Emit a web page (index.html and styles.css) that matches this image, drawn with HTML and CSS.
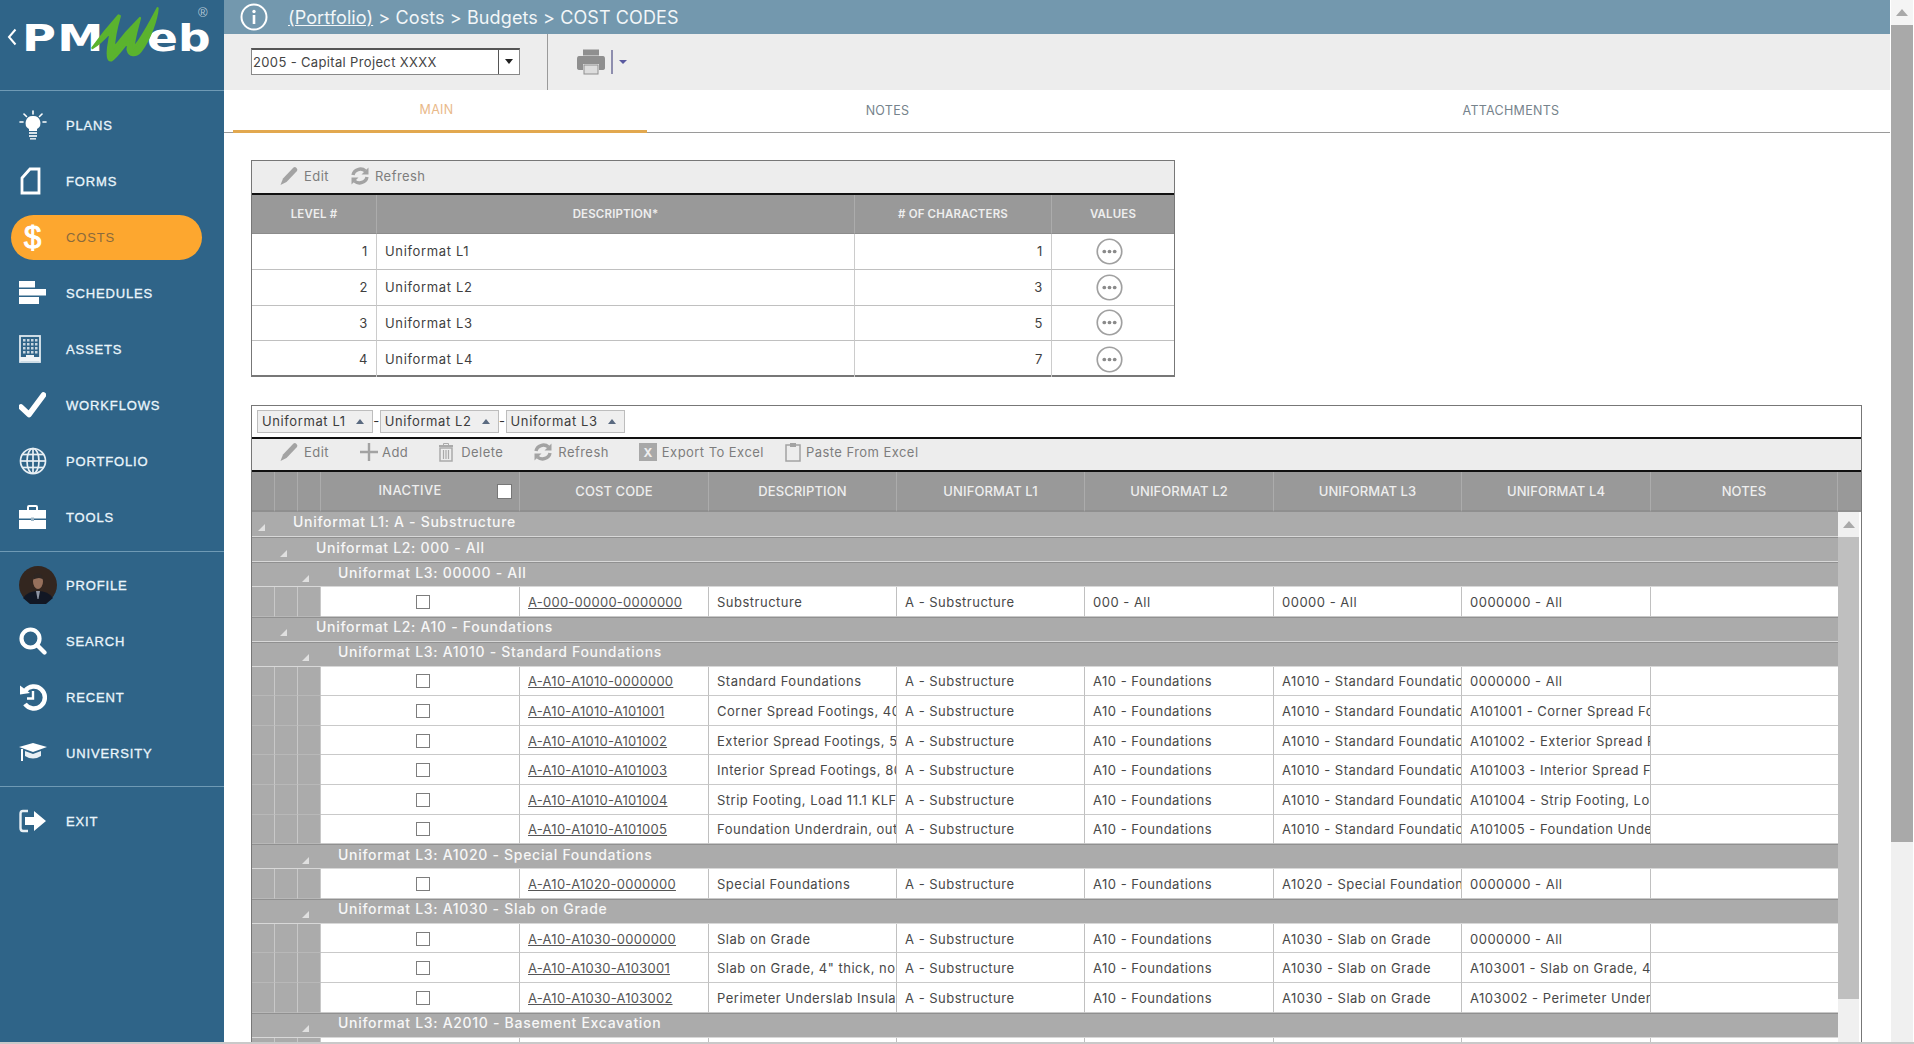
FILE: index.html
```html
<!DOCTYPE html>
<html lang="en">
<head>
<meta charset="utf-8">
<title>Cost Codes</title>
<link rel="stylesheet" href="styles.css">
</head>
<body>
<svg class="sprite" aria-hidden="true">
  <symbol id="i-pencil" viewBox="0 0 20 20"><path d="M1.5 19 L4 12.5 L14.5 1.5 Q16 0.5 17.5 2 Q19 3.5 18 5 L7.5 16 Z" fill="#a3a3a3"/></symbol>
  <symbol id="i-refresh" viewBox="0 0 20 20"><path d="M3 9 A7.5 7 0 0 1 15.5 5" fill="none" stroke="#a3a3a3" stroke-width="3.4"/><path d="M18.5 1.5 V8.5 H11.5 Z" fill="#a3a3a3"/><path d="M17 11 A7.5 7 0 0 1 4.5 15" fill="none" stroke="#a3a3a3" stroke-width="3.4"/><path d="M1.5 18.5 V11.5 H8.5 Z" fill="#a3a3a3"/></symbol>
  <symbol id="i-more" viewBox="0 0 26 26"><circle cx="13" cy="13" r="11.8" fill="#fff" stroke="#a0a0a0" stroke-width="1.6"/><circle cx="8" cy="13" r="1.8" fill="#8a8a8a"/><circle cx="13" cy="13" r="1.8" fill="#8a8a8a"/><circle cx="18" cy="13" r="1.8" fill="#8a8a8a"/></symbol>
</svg>
<div class="app">
  <aside class="sidebar">
    <div class="logo">
      <svg class="logo-chev" viewBox="0 0 10 18"><path d="M8.5 1.5 L2 9 L8.5 16.5" fill="none" stroke="#fff" stroke-width="2"/></svg>
      <span class="logo-pm">PM</span><span class="logo-eb">eb</span>
      <span class="logo-reg">®</span>
      <svg class="logo-w" viewBox="262 18 220 178"><path d="M272 150 C300 110 325 80 352 50 L356 52 C345 90 338 120 338 150 C360 120 385 90 418 58 C410 90 400 120 398 150 C420 125 445 80 472 28 C470 60 450 120 420 160 C405 178 385 175 380 155 L382 130 C365 150 345 180 330 188 C318 190 318 170 320 150 L328 100 C310 120 290 140 272 150 Z" fill="#5bb32e" stroke="#5bb32e" stroke-width="7" stroke-linejoin="round"/></svg>
    </div>
    <nav class="nav-group">
      <a class="nav-item"><span class="nav-icon"><svg viewBox="0 0 28 30" width="28" height="30"><g stroke="#fff" stroke-width="1.6" stroke-linecap="round"><path d="M14 1 V4"/><path d="M5 4 L7.5 6.5"/><path d="M23 4 L20.5 6.5"/><path d="M1 12 H4"/><path d="M24 12 H27"/></g><path d="M14 6 A7 7 0 0 1 18 19 L18 21 H10 L10 19 A7 7 0 0 1 14 6 Z" fill="#fff"/><rect x="10" y="22" width="8" height="2" fill="#d8e2ea"/><rect x="10" y="25" width="8" height="2" fill="#d8e2ea"/><rect x="11" y="28" width="6" height="1.6" fill="#d8e2ea"/></svg></span>PLANS</a>
      <a class="nav-item"><span class="nav-icon"><svg viewBox="0 0 22 28" width="22" height="28"><path d="M3 11 L11 2 H20 V26 H3 Z" fill="none" stroke="#fff" stroke-width="2.8"/></svg></span>FORMS</a>
      <a class="nav-item active"><span class="nav-icon dollar">$</span>COSTS</a>
      <a class="nav-item"><span class="nav-icon"><svg viewBox="0 0 27 24" width="27" height="24"><rect x="0" y="0" width="16" height="6.5" fill="#fff"/><rect x="0" y="8" width="27" height="6.5" fill="#fff"/><rect x="0" y="16" width="20" height="7" fill="#fff"/></svg></span>SCHEDULES</a>
      <a class="nav-item"><span class="nav-icon"><svg viewBox="0 0 22 28" width="22" height="28"><rect x="1" y="1" width="20" height="26" fill="none" stroke="#dfe9f0" stroke-width="1.8"/><g fill="#c7d6e0"><rect x="4" y="4" width="2.5" height="2.5"/><rect x="8" y="4" width="2.5" height="2.5"/><rect x="12" y="4" width="2.5" height="2.5"/><rect x="16" y="4" width="2.5" height="2.5"/><rect x="4" y="8" width="2.5" height="2.5"/><rect x="8" y="8" width="2.5" height="2.5"/><rect x="12" y="8" width="2.5" height="2.5"/><rect x="16" y="8" width="2.5" height="2.5"/><rect x="4" y="12" width="2.5" height="2.5"/><rect x="8" y="12" width="2.5" height="2.5"/><rect x="12" y="12" width="2.5" height="2.5"/><rect x="16" y="12" width="2.5" height="2.5"/><rect x="4" y="16" width="2.5" height="2.5"/><rect x="8" y="16" width="2.5" height="2.5"/><rect x="12" y="16" width="2.5" height="2.5"/><rect x="16" y="16" width="2.5" height="2.5"/></g><path d="M1 26 V22 H7 V20 H15 V22 H21 V26 Z" fill="#eef3f6"/></svg></span>ASSETS</a>
      <a class="nav-item"><span class="nav-icon"><svg viewBox="0 0 27 26" width="27" height="26"><path d="M2 15 L10 22.5 L24.5 3" fill="none" stroke="#fff" stroke-width="5.5" stroke-linejoin="round" stroke-linecap="round"/></svg></span>WORKFLOWS</a>
      <a class="nav-item"><span class="nav-icon"><svg viewBox="0 0 28 28" width="28" height="28"><g fill="none" stroke="#e8eff4" stroke-width="1.7"><circle cx="14" cy="14" r="12.5"/><ellipse cx="14" cy="14" rx="6" ry="12.5"/><path d="M14 1.5 V26.5"/><path d="M1.5 14 H26.5"/><path d="M3.5 7.5 H24.5"/><path d="M3.5 20.5 H24.5"/></g></svg></span>PORTFOLIO</a>
      <a class="nav-item"><span class="nav-icon"><svg viewBox="0 0 27 24" width="27" height="24"><path d="M9 5 V2 Q9 1 10 1 H17 Q18 1 18 2 V5" fill="none" stroke="#fff" stroke-width="2"/><rect x="0" y="5" width="27" height="8.5" fill="#fff"/><rect x="0" y="15" width="27" height="9" fill="#fff"/><rect x="12" y="12.5" width="3" height="3.5" fill="#9db6c6"/></svg></span>TOOLS</a>
    </nav>
    <nav class="nav-group nav-mid">
      <a class="nav-item"><span class="nav-icon"><svg class="avatar" viewBox="0 0 38 38" width="38" height="38"><circle cx="19" cy="19" r="19" fill="#33261f"/><path d="M4 32 Q9 25 19 25 Q29 25 34 32 L27 38 H11 Z" fill="#121724"/><path d="M17 25 H21 L19.5 33 H18.5 Z" fill="#8f95a3"/><ellipse cx="19" cy="15.5" rx="5" ry="7.5" fill="#96705c"/><path d="M14 13.5 Q14 7.5 19 7.5 Q24 7.5 24 13.5 Q21 10.5 14 13.5 Z" fill="#2f2622"/></svg></span>PROFILE</a>
      <a class="nav-item"><span class="nav-icon"><svg viewBox="0 0 28 28" width="28" height="28"><circle cx="11.5" cy="11.5" r="9" fill="none" stroke="#fff" stroke-width="4.2"/><path d="M18 18 L25.5 25.5" stroke="#fff" stroke-width="4.2" stroke-linecap="round"/></svg></span>SEARCH</a>
      <a class="nav-item"><span class="nav-icon"><svg viewBox="0 0 28 28" width="28" height="28"><path d="M6 8 A11 11 0 1 1 6 21" fill="none" stroke="#fff" stroke-width="4.4"/><path d="M1 2.5 L11 10 L1 11.5 Z" fill="#fff"/><path d="M14 8 V15.5 H8" fill="none" stroke="#fff" stroke-width="2.4"/></svg></span>RECENT</a>
      <a class="nav-item"><span class="nav-icon"><svg viewBox="0 0 28 22" width="28" height="22"><path d="M0 5 L14 1 L28 5 L14 10 Z" fill="#fff"/><path d="M6 9 L14 12 L22 9 V14 Q14 19 6 14 Z" fill="#e8eff4"/><path d="M3 7 V19" stroke="#fff" stroke-width="2"/></svg></span>UNIVERSITY</a>
    </nav>
    <nav class="nav-group last">
      <a class="nav-item"><span class="nav-icon"><svg viewBox="0 0 28 24" width="28" height="24"><path d="M9 2 H4 Q1.5 2 1.5 5 V19 Q1.5 22 4 22 H9" fill="none" stroke="#e8eff4" stroke-width="2.4"/><path d="M6 8 H15 V2 L27 12 L15 22 V16 H6 Z" fill="#fff"/></svg></span>EXIT</a>
    </nav>
  </aside>

  <div class="main">
    <header class="crumbs">
      <svg class="info" viewBox="0 0 28 28" width="28" height="28"><circle cx="14" cy="14" r="12.5" fill="none" stroke="#fff" stroke-width="2"/><circle cx="14" cy="8.5" r="1.7" fill="#fff"/><rect x="12.7" y="12" width="2.6" height="9" fill="#fff"/></svg>
      <span class="trail"><a class="trail-link">(Portfolio)</a> &gt; Costs &gt; Budgets &gt; COST CODES</span>
    </header>
    <div class="toolbar">
      <div class="select"><span class="select-text">2005 - Capital Project XXXX</span><span class="select-btn"><i class="caret-down"></i></span></div>
      <div class="print">
        <svg viewBox="0 0 28 26" width="28" height="26"><rect x="6" y="0.5" width="16" height="6" fill="#8f8f8f"/><path d="M2 7 H26 Q28 7 28 10 V19 Q28 21 25 21 H22 V15 H6 V21 H3 Q0 21 0 19 V10 Q0 7 2 7 Z" fill="#8f8f8f"/><rect x="7" y="16" width="14" height="9" fill="#ddd" stroke="#8f8f8f"/></svg>
        <span class="print-sep"></span><i class="caret-print"></i>
      </div>
    </div>
    <div class="tabs">
      <a class="tab tab-main active">MAIN</a>
      <a class="tab tab-notes">NOTES</a>
      <a class="tab tab-att">ATTACHMENTS</a>
    </div>
    <div class="content">
      <section class="panel levels">
        <div class="actions actions-tight">
          <span class="action"><svg width="20" height="20"><use href="#i-pencil"/></svg>Edit</span>
          <span class="action"><svg width="20" height="20"><use href="#i-refresh"/></svg>Refresh</span>
        </div>
        <table class="lv">
          <colgroup><col class="lv-a"><col class="lv-b"><col class="lv-c"><col class="lv-d"></colgroup>
          <thead><tr><th>LEVEL #</th><th>DESCRIPTION*</th><th># OF CHARACTERS</th><th>VALUES</th></tr></thead>
          <tbody>
            <tr><td class="num">1</td><td>Uniformat L1</td><td class="num">1</td><td class="more"><svg width="27" height="27"><use href="#i-more"/></svg></td></tr>
            <tr><td class="num">2</td><td>Uniformat L2</td><td class="num">3</td><td class="more"><svg width="27" height="27"><use href="#i-more"/></svg></td></tr>
            <tr><td class="num">3</td><td>Uniformat L3</td><td class="num">5</td><td class="more"><svg width="27" height="27"><use href="#i-more"/></svg></td></tr>
            <tr><td class="num">4</td><td>Uniformat L4</td><td class="num">7</td><td class="more"><svg width="27" height="27"><use href="#i-more"/></svg></td></tr>
          </tbody>
        </table>
      </section>

      <section class="panel codes">
        <div class="chips">
          <span class="chip">Uniformat L1<i class="caret-up"></i></span><span class="dash">-</span><span class="chip">Uniformat L2<i class="caret-up"></i></span><span class="dash">-</span><span class="chip">Uniformat L3<i class="caret-up"></i></span>
        </div>
        <div class="actions">
          <span class="action"><svg width="20" height="20"><use href="#i-pencil"/></svg>Edit</span>
          <span class="action action-add"><svg width="20" height="20" viewBox="0 0 20 20"><path d="M10 1 V19 M1 10 H19" stroke="#a3a3a3" stroke-width="2.4"/></svg>Add</span>
          <span class="action action-wide"><svg width="16" height="20" viewBox="0 0 16 20"><path d="M5.5 3 V1.5 H10.5 V3" fill="none" stroke="#aaa"/><rect x="1" y="3" width="14" height="2" fill="#aaa"/><rect x="2" y="6" width="12" height="13" fill="none" stroke="#aaa" stroke-width="1.5"/><path d="M5.5 8 V17 M8 8 V17 M10.5 8 V17" stroke="#aaa" stroke-width="1.2"/></svg>Delete</span>
          <span class="action"><svg width="20" height="20"><use href="#i-refresh"/></svg>Refresh</span>
          <span class="action"><span class="xl">X</span>Export To Excel</span>
          <span class="action action-near"><svg width="16" height="20" viewBox="0 0 16 20"><rect x="1" y="3" width="14" height="16" fill="none" stroke="#a3a3a3" stroke-width="1.5"/><rect x="5" y="1" width="6" height="4" fill="#a3a3a3"/></svg>Paste From Excel</span>
        </div>
        <table class="gh">
          <colgroup><col class="c-g1"><col class="c-g2"><col class="c-g3"><col class="c-in"><col class="c-cc"><col class="c-de"><col class="c-l1"><col class="c-l2"><col class="c-l3"><col class="c-l4"><col class="c-no"><col class="c-sb"></colgroup>
          <thead><tr><th></th><th></th><th></th><th class="inactive-h"><span class="inactive-wrap"><span class="inactive-label">INACTIVE</span><i class="cb-white"></i></span></th><th>COST CODE</th><th>DESCRIPTION</th><th>UNIFORMAT L1</th><th>UNIFORMAT L2</th><th>UNIFORMAT L3</th><th>UNIFORMAT L4</th><th>NOTES</th><th></th></tr></thead>
        </table>
        <div class="gbody">
          <div class="gscroll">
            <table class="gt">
              <colgroup><col class="c-g1"><col class="c-g2"><col class="c-g3"><col class="c-in"><col class="c-cc"><col class="c-de"><col class="c-l1"><col class="c-l2"><col class="c-l3"><col class="c-l4"><col class="c-no"></colgroup>
              <tbody>
                <tr class="grp l1"><td colspan="11"><i class="tri"></i>Uniformat L1: A - Substructure</td></tr>
                <tr class="grp l2"><td colspan="11"><i class="tri"></i>Uniformat L2: 000 - All</td></tr>
                <tr class="grp l3"><td colspan="11"><i class="tri"></i>Uniformat L3: 00000 - All</td></tr>
                <tr class="row"><td class="g"></td><td class="g"></td><td class="g"></td><td class="ck"><i class="cb"></i></td><td><a>A-000-00000-0000000</a></td><td>Substructure</td><td>A - Substructure</td><td>000 - All</td><td>00000 - All</td><td>0000000 - All</td><td></td></tr>
                <tr class="grp l2"><td colspan="11"><i class="tri"></i>Uniformat L2: A10 - Foundations</td></tr>
                <tr class="grp l3"><td colspan="11"><i class="tri"></i>Uniformat L3: A1010 - Standard Foundations</td></tr>
                <tr class="row"><td class="g"></td><td class="g"></td><td class="g"></td><td class="ck"><i class="cb"></i></td><td><a>A-A10-A1010-0000000</a></td><td>Standard Foundations</td><td>A - Substructure</td><td>A10 - Foundations</td><td>A1010 - Standard Foundations</td><td>0000000 - All</td><td></td></tr>
                <tr class="row"><td class="g"></td><td class="g"></td><td class="g"></td><td class="ck"><i class="cb"></i></td><td><a>A-A10-A1010-A101001</a></td><td>Corner Spread Footings, 40 SF</td><td>A - Substructure</td><td>A10 - Foundations</td><td>A1010 - Standard Foundations</td><td>A101001 - Corner Spread Footings</td><td></td></tr>
                <tr class="row"><td class="g"></td><td class="g"></td><td class="g"></td><td class="ck"><i class="cb"></i></td><td><a>A-A10-A1010-A101002</a></td><td>Exterior Spread Footings, 5 SF</td><td>A - Substructure</td><td>A10 - Foundations</td><td>A1010 - Standard Foundations</td><td>A101002 - Exterior Spread Footings</td><td></td></tr>
                <tr class="row"><td class="g"></td><td class="g"></td><td class="g"></td><td class="ck"><i class="cb"></i></td><td><a>A-A10-A1010-A101003</a></td><td>Interior Spread Footings, 80 SF</td><td>A - Substructure</td><td>A10 - Foundations</td><td>A1010 - Standard Foundations</td><td>A101003 - Interior Spread Footings</td><td></td></tr>
                <tr class="row"><td class="g"></td><td class="g"></td><td class="g"></td><td class="ck"><i class="cb"></i></td><td><a>A-A10-A1010-A101004</a></td><td>Strip Footing, Load 11.1 KLF, Soil</td><td>A - Substructure</td><td>A10 - Foundations</td><td>A1010 - Standard Foundations</td><td>A101004 - Strip Footing, Load</td><td></td></tr>
                <tr class="row"><td class="g"></td><td class="g"></td><td class="g"></td><td class="ck"><i class="cb"></i></td><td><a>A-A10-A1010-A101005</a></td><td>Foundation Underdrain, outside</td><td>A - Substructure</td><td>A10 - Foundations</td><td>A1010 - Standard Foundations</td><td>A101005 - Foundation Underdrain</td><td></td></tr>
                <tr class="grp l3"><td colspan="11"><i class="tri"></i>Uniformat L3: A1020 - Special Foundations</td></tr>
                <tr class="row"><td class="g"></td><td class="g"></td><td class="g"></td><td class="ck"><i class="cb"></i></td><td><a>A-A10-A1020-0000000</a></td><td>Special Foundations</td><td>A - Substructure</td><td>A10 - Foundations</td><td>A1020 - Special Foundations</td><td>0000000 - All</td><td></td></tr>
                <tr class="grp l3"><td colspan="11"><i class="tri"></i>Uniformat L3: A1030 - Slab on Grade</td></tr>
                <tr class="row"><td class="g"></td><td class="g"></td><td class="g"></td><td class="ck"><i class="cb"></i></td><td><a>A-A10-A1030-0000000</a></td><td>Slab on Grade</td><td>A - Substructure</td><td>A10 - Foundations</td><td>A1030 - Slab on Grade</td><td>0000000 - All</td><td></td></tr>
                <tr class="row"><td class="g"></td><td class="g"></td><td class="g"></td><td class="ck"><i class="cb"></i></td><td><a>A-A10-A1030-A103001</a></td><td>Slab on Grade, 4" thick, non</td><td>A - Substructure</td><td>A10 - Foundations</td><td>A1030 - Slab on Grade</td><td>A103001 - Slab on Grade, 4" thick</td><td></td></tr>
                <tr class="row"><td class="g"></td><td class="g"></td><td class="g"></td><td class="ck"><i class="cb"></i></td><td><a>A-A10-A1030-A103002</a></td><td>Perimeter Underslab Insulation</td><td>A - Substructure</td><td>A10 - Foundations</td><td>A1030 - Slab on Grade</td><td>A103002 - Perimeter Underslab</td><td></td></tr>
                <tr class="grp l3"><td colspan="11"><i class="tri"></i>Uniformat L3: A2010 - Basement Excavation</td></tr>
                <tr class="row"><td class="g"></td><td class="g"></td><td class="g"></td><td class="ck"></td><td></td><td></td><td></td><td></td><td></td><td></td><td></td></tr>
              </tbody>
            </table>
          </div>
          <div class="vscroll"><span class="vs-up"><i class="caret-scroll"></i></span><span class="vs-thumb"></span><span class="vs-track"></span></div>
        </div>
      </section>
    </div>
  </div>

  <div class="pagebar"><span class="pb-up"><i class="caret-scroll"></i></span><span class="pb-thumb"></span><span class="pb-track"></span></div>
</div>
</body>
</html>
```

FILE: styles.css
```css
* { box-sizing: border-box; }
html, body { margin: 0; padding: 0; height: 100%; overflow: hidden; background: #fff; }
body { font-family: Inter, "Liberation Sans", sans-serif; font-size: 13px; color: #444; }
a { color: inherit; text-decoration: none; }
i { font-style: normal; }
.sprite { position: absolute; width: 0; height: 0; overflow: hidden; }

.app { display: flex; width: 1914px; height: 1044px; border-bottom: 2px solid #c9c9c9; overflow: hidden; }

/* sidebar */
.sidebar { width: 224px; flex: none; background: #2f6488; color: #fff; font-family: "Liberation Sans", Arial, sans-serif; }
.logo { position: relative; height: 91px; border-bottom: 1px solid #6f9ab5; padding: 16px 0 0 22px; display: flex; align-items: flex-start; color: #fff; font-family: "DejaVu Sans", sans-serif; font-weight: 700; font-size: 38px; line-height: 44px; }
.logo-chev { position: absolute; left: 7px; top: 28px; width: 10px; height: 18px; }
.logo-pm { letter-spacing: 1px; width: 125px; transform: scaleX(1.22); transform-origin: left; }
.logo-eb { letter-spacing: 0; transform: scaleX(1.2); transform-origin: left; }
.logo-reg { position: absolute; left: 198px; top: 4px; font-size: 13px; line-height: 18px; font-weight: 400; color: #b5c8d6; font-family: "Liberation Sans", sans-serif; }
.logo-w { position: absolute; left: 89px; top: 5px; width: 72px; height: 58px; }

.nav-group { padding: 6px 0; border-bottom: 1px solid #6f9ab5; }
.nav-group.nav-mid { padding: 5px 0; }
.nav-group.last { border-bottom: 0; }
.nav-item { display: flex; align-items: center; height: 56px; padding-left: 19px; font-size: 13px; font-weight: 400; letter-spacing: 0.85px; color: #eaf5fb; -webkit-text-stroke: 0.3px #eaf5fb; position: relative; }
.nav-item.active { color: #8a6a3c; -webkit-text-stroke: 0; z-index: 0; }
.nav-item.active::before { content: ""; position: absolute; left: 11px; top: 6px; width: 191px; height: 45px; border-radius: 23px; background: #fda72f; z-index: -1; }
.nav-icon { width: 47px; flex: none; display: flex; align-items: center; }
.nav-icon .avatar { display: block; }
.dollar { font-size: 31px; font-weight: 400; color: #fff; -webkit-text-stroke: 1px #fff; padding-left: 5px; line-height: 1; }

/* main column */
.main { width: 1666px; flex: none; display: flex; flex-direction: column; min-height: 0; }
.crumbs { height: 34px; flex: none; background: #7398ae; display: flex; align-items: center; padding-left: 16px; color: #f2f6f8; font-size: 18px; }
.info { flex: none; }
.trail { margin-left: 20px; letter-spacing: 0.1px; }
.trail-link { text-decoration: underline; }
.toolbar { height: 56px; flex: none; background: #ededed; display: flex; align-items: center; padding-left: 27px; }
.select { width: 269px; height: 27px; background: #fff; border: 1px solid #888; border-top: 2px solid #555; display: flex; align-items: stretch; margin-top: -2px; }
.select-text { flex: 1; padding-left: 1px; line-height: 25px; color: #444; letter-spacing: 0.35px; white-space: nowrap; }
.select-btn { width: 21px; border-left: 1px solid #555; display: flex; align-items: center; justify-content: center; }
.caret-down { width: 0; height: 0; border: 4px solid transparent; border-top: 5px solid #222; border-bottom: 0; }
.print { height: 56px; margin-left: 27px; border-left: 1px solid #9a9a9a; padding-left: 29px; display: flex; align-items: center; }
.print-sep { width: 2px; height: 24px; background: #8e8eae; margin-left: 6px; }
.caret-print { width: 0; height: 0; margin-left: 6px; border: 4px solid transparent; border-top: 4px solid #5a5aa0; border-bottom: 0; }

.tabs { height: 43px; flex: none; display: flex; padding-left: 9px; border-bottom: 1px solid #9a9a9a; font-size: 12.5px; letter-spacing: 0.3px; }
.tab { display: flex; align-items: center; justify-content: center; color: #76838c; height: 43px; padding-bottom: 2px; }
.tab-main { width: 414px; padding-right: 7px; }
.tab-notes { width: 483px; padding-right: 2px; }
.tab-att { width: 760px; padding-left: 2px; }
.tab.active { color: #e9b98a; border-bottom: 3px solid #e2a84f; }

.content { flex: 1; min-height: 0; padding: 27px 0 0 27px; display: flex; flex-direction: column; gap: 28px; overflow: hidden; }
.panel { border: 1px solid #777; background: #fff; }
.levels { width: 924px; height: 217px; flex: none; border-bottom: 2px solid #777; }
.codes { width: 1611px; flex: 1; min-height: 0; display: flex; flex-direction: column; border-bottom: 0; }

.actions { height: 34px; flex: none; background: #ededed; border-bottom: 2px solid #111; display: flex; align-items: center; padding: 0 0 2px 27px; gap: 30px; color: #7d7d7d; letter-spacing: 0.45px; }
.actions-tight { gap: 21px; }
.action { display: flex; align-items: center; gap: 5px; white-space: nowrap; }
.action-add { gap: 3px; }
.action-wide { gap: 7px; }
.action-near { margin-left: -9px; }
.xl { width: 18px; height: 18px; background: #a8a8a8; color: #eee; font-size: 12px; font-weight: 700; display: flex; align-items: center; justify-content: center; letter-spacing: 0; }

table { border-collapse: separate; border-spacing: 0; table-layout: fixed; }
th { font-weight: 500; color: #eee; background: #999; text-align: center; border-right: 1px solid #acacac; padding: 0; white-space: nowrap; overflow: hidden; }
th:last-child { border-right: 0; }

.lv { width: 922px; }
.lv-a { width: 125px; } .lv-b { width: 478px; } .lv-c { width: 197px; } .lv-d { width: 122px; }
.lv th { height: 39px; font-size: 11.5px; font-weight: 600; letter-spacing: 0.15px; border-bottom: 1px solid #8c8c8c; }
.lv td { height: 35.8px; border-right: 1px solid #ccc; border-bottom: 1px solid #c0c0c0; padding: 0 0 0 8px; color: #3f3f3f; letter-spacing: 0.65px; }
.lv td:last-child { border-right: 0; }
.lv tr:last-child td { border-bottom: 0; }
.lv td.num { text-align: right; padding: 0 8px 0 0; }
.lv td.more { padding: 0 0 0 44px; line-height: 0; }

.chips { height: 31px; flex: none; display: flex; align-items: center; padding: 0 0 1px 5px; border-bottom: 0; }
.chip { height: 23px; background: #efefef; border: 1px solid #bdbdbd; display: flex; align-items: center; padding: 0 8px 0 4px; color: #3d3d3d; letter-spacing: 0.6px; white-space: nowrap; }
.dash { width: 7px; text-align: center; color: #333; }
.caret-up { width: 0; height: 0; margin-left: 10px; border: 4px solid transparent; border-bottom: 5px solid #5a6a80; border-top: 0; }
.codes .actions { border-top: 2px solid #111; height: 35px; padding-bottom: 5px; }

.c-g1 { width: 23px; } .c-g2 { width: 23px; } .c-g3 { width: 23px; } .c-in { width: 199px; } .c-cc { width: 189px; } .c-de { width: 188px; } .c-l1 { width: 188px; } .c-l2 { width: 189px; } .c-l3 { width: 188px; } .c-l4 { width: 189px; } .c-no { width: 187px; } .c-sb { width: 23px; }

.gh { width: 1609px; flex: none; }
.gh th { height: 40px; font-size: 13px; letter-spacing: 0.1px; border-bottom: 2px solid #8f8f8f; }
.inactive-wrap { display: flex; align-items: center; }
.inactive-label { flex: 1; padding: 0 0 3px 2px; font-size: 13px; letter-spacing: 0.3px; }
.cb-white { width: 15px; height: 15px; background: #fff; border: 1px solid #777; margin-right: 7px; }

.gbody { flex: 1; min-height: 0; display: flex; overflow: hidden; }
.gscroll { width: 1586px; flex: none; overflow: hidden; }
.gt { width: 1586px; }
.gt td { padding: 1px 0 0 8px; white-space: nowrap; overflow: hidden; color: #484848; letter-spacing: 0.5px; }
.gt .grp td { height: 25px; background: #ababab; color: #f7f7f7; font-size: 14px; font-weight: 500; letter-spacing: 0.7px; border-bottom: 1px solid #d8d8d8; border-top: 1px solid #909090; padding: 0 0 4px 0; }
.gt .grp.l1 td { padding-left: 6px; border-top: 0; }
.gt .grp.l2 td { padding-left: 28px; }
.gt .grp.l3 td { padding-left: 50px; }
.tri { display: inline-block; width: 0; height: 0; margin-right: 29px; border-style: solid; border-width: 0 0 7px 7px; border-color: transparent transparent #e0e0e0 transparent; vertical-align: -4px; }
.grp.l1 .tri { margin-right: 28px; }
.row td { height: 29.6px; border-right: 1px solid #c0c0c0; border-bottom: 1px solid #c9c9c9; }
.gt .row td.g { background: #ababab; border-right: 1px solid #c8c8c8; border-bottom: 1px solid #b8b8b8; padding: 0; }
.row td:last-child { border-right: 0; }
.gt .row td.ck { text-align: center; padding: 1px 0 0 5px; line-height: 0; }
.gt .row a { text-decoration: underline; color: #555; letter-spacing: 0.25px; }
.cb { display: inline-block; width: 14px; height: 14px; border: 1px solid #7d7d7d; background: #fff; }

.vscroll { width: 23px; flex: none; display: flex; flex-direction: column; padding: 0 2px 0 0; }
.vs-up { height: 25px; background: #f0f0f0; display: flex; align-items: center; justify-content: center; }
.vs-thumb { height: 462px; background: #bfbfbf; }
.vs-track { flex: 1; background: #f0f0f0; }
.caret-scroll { width: 0; height: 0; border: 6px solid transparent; border-bottom: 7px solid #a9a9a9; border-top: 0; }

.pagebar { width: 24px; flex: none; display: flex; flex-direction: column; padding-right: 1px; padding-left: 1px; }
.pb-up { height: 25px; background: #f4f4f4; display: flex; align-items: center; justify-content: center; }
.pb-thumb { height: 817px; background: #a9a9a9; }
.pb-track { flex: 1; background: #f0f0f0; }
```
